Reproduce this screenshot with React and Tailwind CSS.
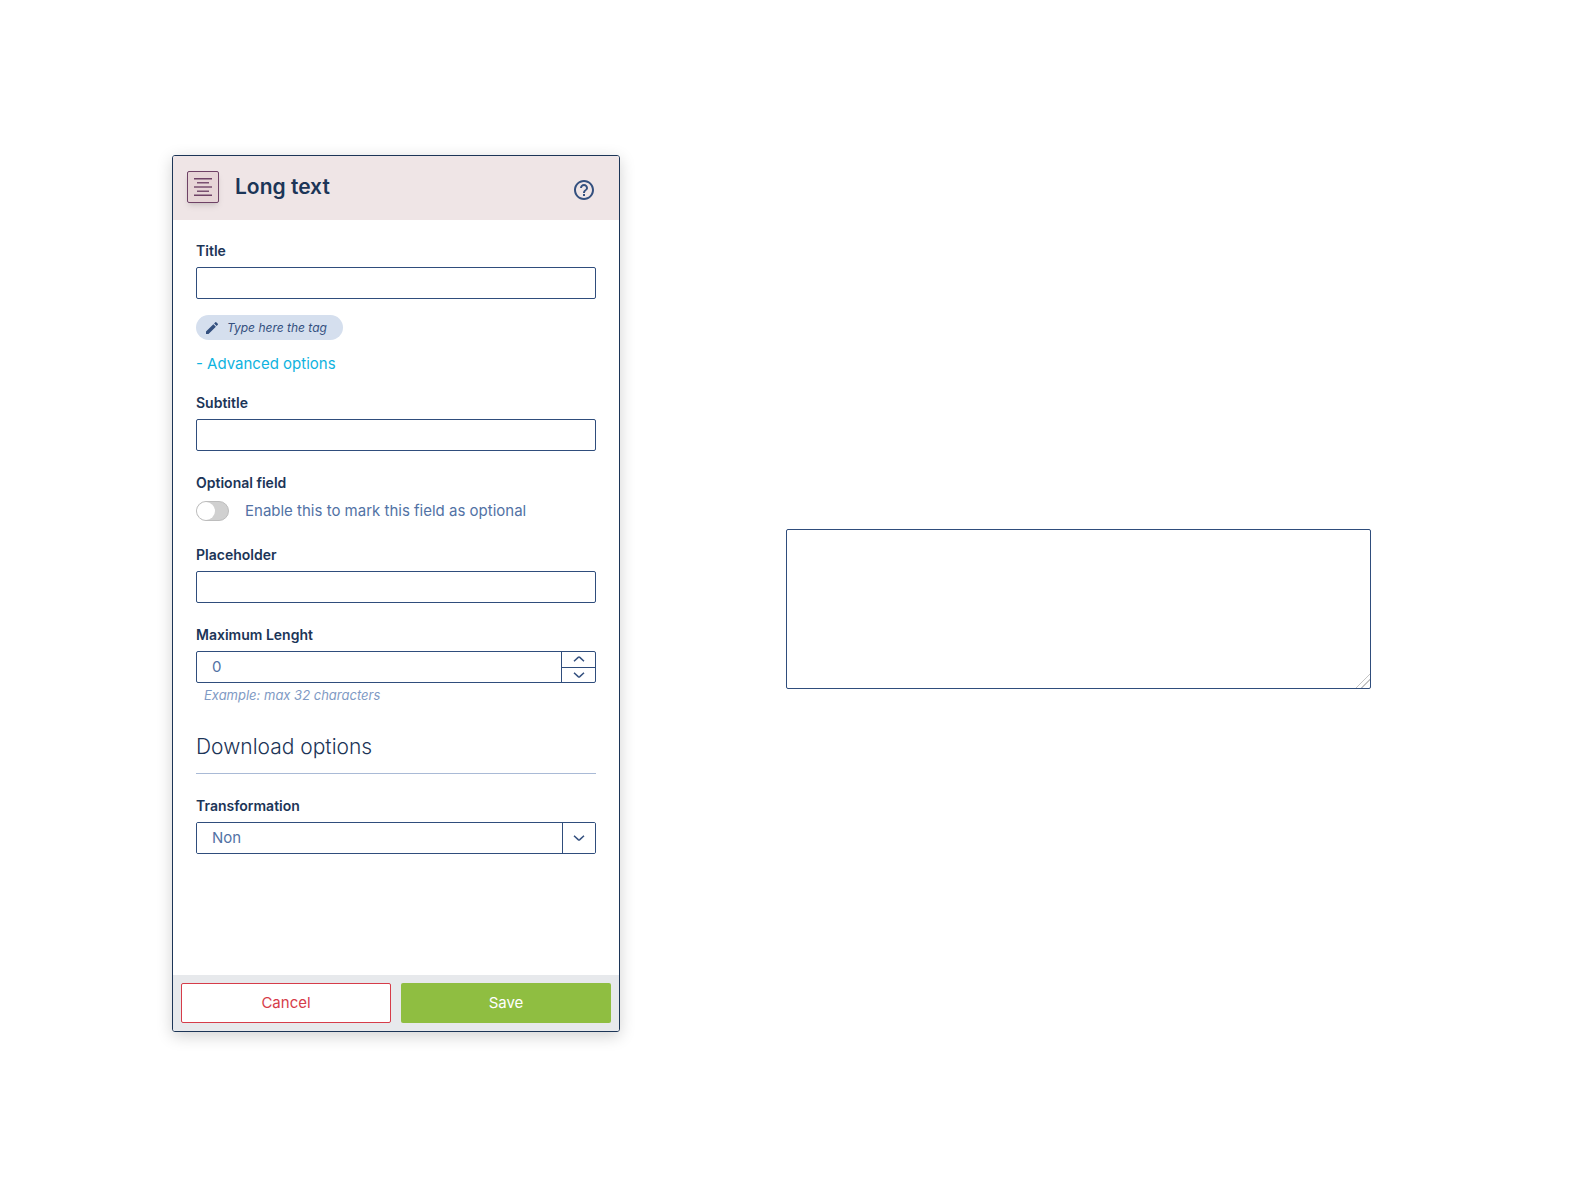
import React, { useState } from 'react';
import { MdEdit, MdHelpOutline } from 'react-icons/md';

const Chevron = ({ up }) => (
  <svg width="12" height="8" viewBox="0 0 12 8" fill="none" stroke="currentColor" strokeWidth="1.5" aria-hidden="true">
    <path d={up ? 'M1 6.3 L5.2 2.4 Q6 1.7 6.8 2.4 L11 6.3' : 'M1 1.7 L5.2 5.6 Q6 6.3 6.8 5.6 L11 1.7'} />
  </svg>
);

const LongTextIcon = () => (
  <span className="flex size-8 items-center justify-center rounded-xs border border-[#6f4266] bg-[#e7d5d7] shadow-md">
    <svg width="18" height="18" viewBox="0 0 18 18" stroke="#6f4266" aria-hidden="true">
      <path d="M0 .7H18M0 17.3H18" strokeWidth="1.5" />
      <path d="M3 4.8H15M0 9H18M3 13.2H15" strokeWidth="1.6" opacity=".9" />
    </svg>
  </span>
);

const Field = ({ id, label, children }) => (
  <div className="flex flex-col">
    <label htmlFor={id} className="mb-1.5 text-sm leading-5 font-semibold text-[#1c3557]">
      {label}
    </label>
    {children}
  </div>
);

const TextInput = ({ id }) => (
  <input id={id} type="text" className="h-8 w-full rounded-xs border border-[#2f4d7c] bg-white px-4 text-[15px] text-[#5272a5] outline-none" />
);

const App = () => {
  const [optional, setOptional] = useState(false);
  const [max, setMax] = useState(0);

  return (
    <main className="flex min-h-screen items-center bg-white font-['Inter',sans-serif]">
      {/* Field settings */}
      <div className="w-1/2 py-10 pl-[172px]">
        <form
          className="flex min-h-[877px] w-full max-w-[448px] flex-col overflow-hidden rounded-[3px] border border-[#1c3557] bg-white shadow-[0_4px_16px_rgba(0,0,0,0.18)]"
          onSubmit={(e) => e.preventDefault()}
        >
          <header className="flex h-16 items-center bg-[#efe5e6] pr-[23px] pb-0.5 pl-3.5">
            <LongTextIcon />
            <h1 className="ml-4 flex-1 text-[21px] leading-8 font-semibold text-[#1c3557]">Long text</h1>
            <button type="button" aria-label="Help" className="pt-1.5 text-[#34507f]">
              <MdHelpOutline size={24} />
            </button>
          </header>

          <div className="flex flex-1 flex-col px-[23px] pt-[21px]">
            <Field id="title" label="Title">
              <TextInput id="title" />
            </Field>

            <label className="mt-4 flex h-[25px] w-[147px] items-center rounded-full bg-[#d5dfee] pl-2 text-[#34507f]">
              <MdEdit size={16} className="shrink-0" />
              <input
                type="text"
                aria-label="Tag"
                placeholder="Type here the tag"
                className="ml-[7px] w-full min-w-0 bg-transparent text-xs italic outline-none placeholder:text-[#34507f]"
              />
            </label>

            <button type="button" className="mt-3.5 self-start text-[15px] leading-5 text-[#0fb3e0]">
              - Advanced options
            </button>

            <div className="mt-[19px] flex flex-col gap-[22px]">
              <Field id="subtitle" label="Subtitle">
                <TextInput id="subtitle" />
              </Field>

              <Field id="optional" label="Optional field">
                <label className="flex items-center gap-4 text-[15px] leading-6 text-[#5272a5]">
                  <input
                    id="optional"
                    type="checkbox"
                    role="switch"
                    checked={optional}
                    onChange={(e) => setOptional(e.target.checked)}
                    className="h-5 w-[33px] appearance-none rounded-full border border-[#bdbdbd] bg-[#d0d0d0] before:block before:size-[18px] before:rounded-full before:bg-white checked:bg-[#8fbe41] checked:before:ml-auto"
                  />
                  Enable this to mark this field as optional
                </label>
              </Field>

              <Field id="placeholder" label="Placeholder">
                <TextInput id="placeholder" />
              </Field>

              <Field id="max" label="Maximum Lenght">
                <div className="flex h-8 overflow-hidden rounded-xs border border-[#2f4d7c] text-[#34507f]">
                  <input
                    id="max"
                    type="number"
                    value={max}
                    onChange={(e) => setMax(Number(e.target.value))}
                    className="min-w-0 flex-1 appearance-none px-[15px] text-[15px] text-[#5272a5] outline-none [&::-webkit-inner-spin-button]:appearance-none"
                  />
                  <div className="flex w-[34px] flex-col divide-y divide-[#2f4d7c] border-l border-[#2f4d7c]">
                    <button type="button" aria-label="Increase" className="flex flex-1 items-center justify-center" onClick={() => setMax(max + 1)}>
                      <Chevron up />
                    </button>
                    <button type="button" aria-label="Decrease" className="flex flex-1 items-center justify-center" onClick={() => setMax(Math.max(0, max - 1))}>
                      <Chevron />
                    </button>
                  </div>
                </div>
                <p className="mt-0.5 pl-2 text-[13px] leading-5 text-[#7f9ac4] italic">Example: max 32 characters</p>
              </Field>
            </div>

            <h2 className="mt-7 border-b border-[#a9bad6] pb-3 text-[21px] leading-7 font-light text-[#1c3557]">Download options</h2>

            <div className="mt-[22px]">
              <Field id="transformation" label="Transformation">
                <div className="grid h-8 grid-cols-[1fr_33px] overflow-hidden rounded-xs border border-[#2f4d7c] text-[#34507f]">
                  <select
                    id="transformation"
                    className="col-span-2 col-start-1 row-start-1 appearance-none bg-white px-[15px] text-[15px] text-[#5272a5] outline-none"
                  >
                    <option>Non</option>
                  </select>
                  <span className="pointer-events-none col-start-2 row-start-1 flex items-center justify-center border-l border-[#2f4d7c]">
                    <Chevron />
                  </span>
                </div>
              </Field>
            </div>
          </div>

          <footer className="grid h-14 grid-cols-2 gap-2.5 bg-[#e7e9ec] p-2 text-[15px]">
            <button type="button" className="rounded-xs border border-[#d63c49] bg-white text-[#d63c49]">
              Cancel
            </button>
            <button type="submit" className="rounded-xs bg-[#8fbe41] text-white">
              Save
            </button>
          </footer>
        </form>
      </div>

      {/* Preview */}
      <div className="w-1/2 pt-[30px] pr-[201px]">
        <textarea
          aria-label="Long text"
          className="block h-40 w-full rounded-xs border border-[#2f4d7c] bg-white p-4 text-[15px] text-[#5272a5] outline-none [&::-webkit-resizer]:bg-[linear-gradient(135deg,transparent_50%,#c4c4c4_50%,#c4c4c4_56%,transparent_56%,transparent_68%,#c4c4c4_68%,#c4c4c4_74%,transparent_74%)]"
        />
      </div>
    </main>
  );
};

export default App;
